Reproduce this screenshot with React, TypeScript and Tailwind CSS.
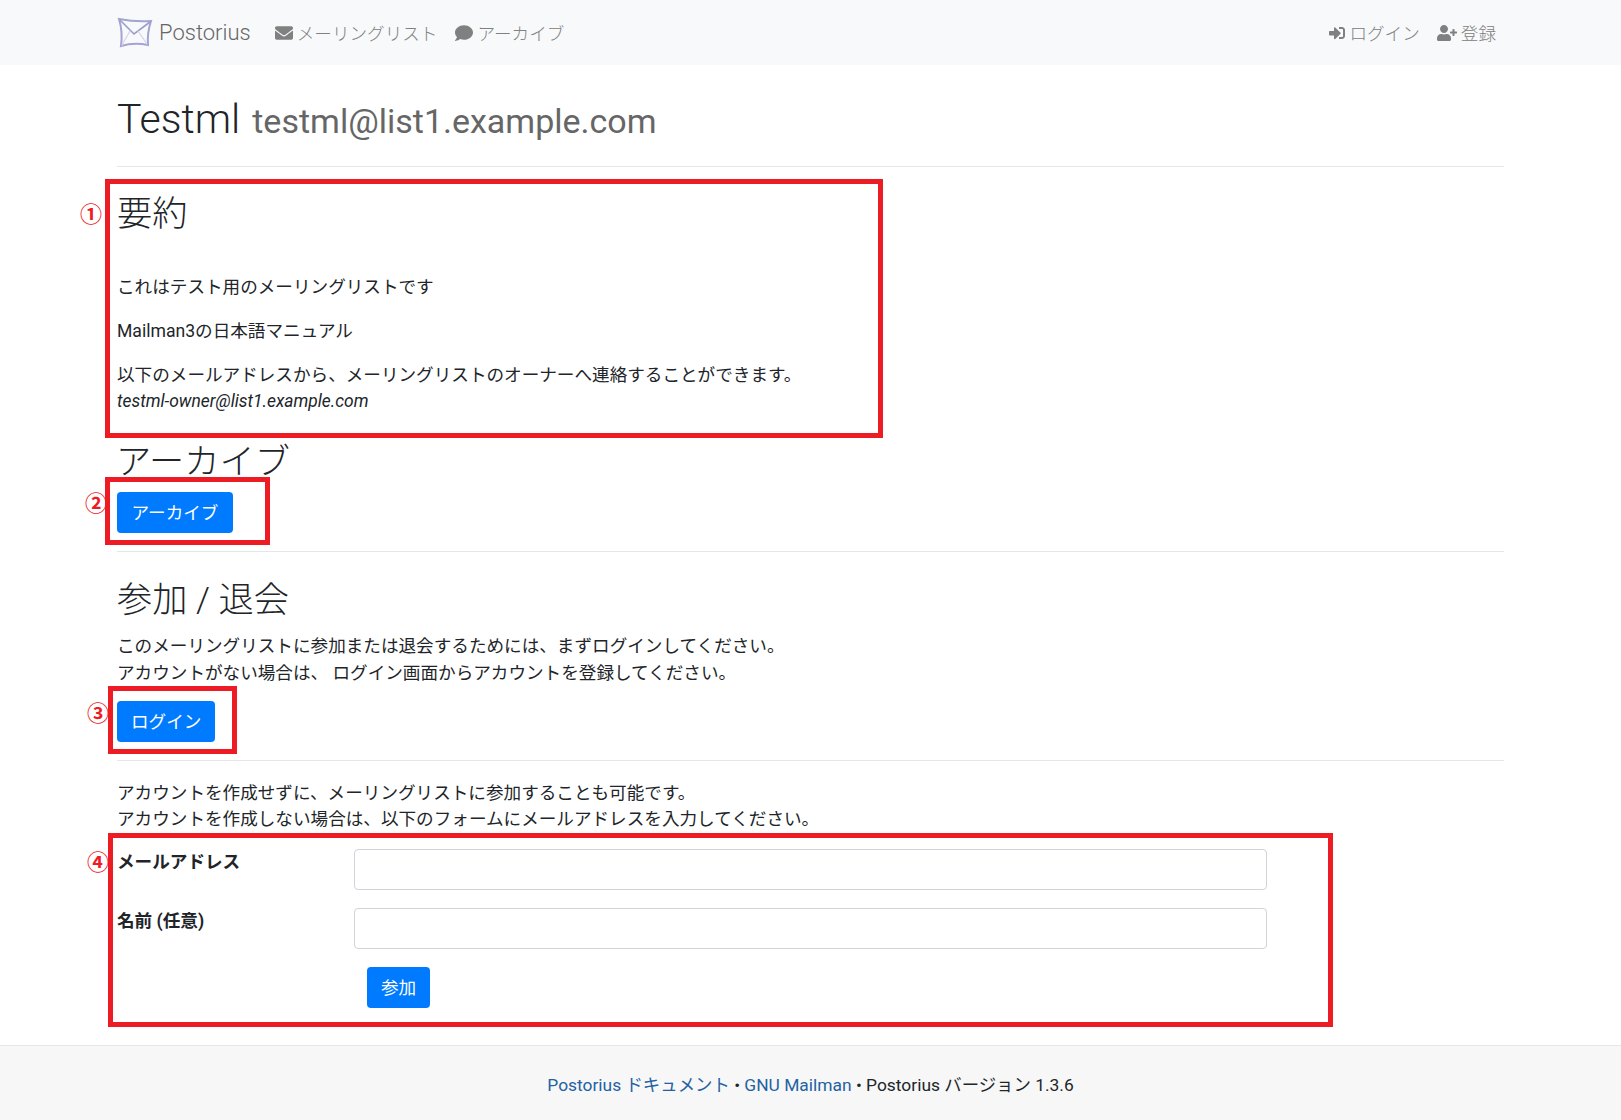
import React from 'react';
import { FaEnvelope, FaComment, FaSignInAlt, FaUserPlus } from 'react-icons/fa';

const Logo = () => (
    <svg width="36" height="31" viewBox="0 0 36 31" fill="none" strokeLinecap="round">
        <path d="M2 2 Q18 5 34 4 Q30 16 31 28 Q17 25 4 29 Q6 15 2 2 Z" stroke="#a3a3d4" strokeWidth="2" />
        <path d="M3 3 L17 17 L33 5" stroke="#9c9ccf" strokeWidth="1.6" />
        <path d="M5 28 L13 14 M30 27 L21 14" stroke="#d4d4ea" strokeWidth="1.2" />
    </svg>
);

const NavLink: React.FC<{ icon: React.ReactNode, label: string }> = ({ icon, label }) => (
    <a href="#" className="flex items-center gap-[4px] text-[#808080]">
        {icon}
        <span className="relative top-[2px]">{label}</span>
    </a>
);

const Heading: React.FC<{ children: React.ReactNode, className?: string }> = ({ children, className }) => (
    <h2 className={`text-[35.2px] leading-[42px] font-light ${className ?? ''}`}>{children}</h2>
);

const Button: React.FC<{ label: string, className?: string }> = ({ label, className }) => (
    <button className={`h-[41px] px-[14px] pt-[2px] bg-[#007bff] text-white rounded-[4px] ${className ?? ''}`}>{label}</button>
);

const RedBox: React.FC<{ className: string }> = ({ className }) => (
    <div className={`absolute border-[5px] border-[#ed1c24] pointer-events-none ${className}`} />
);

const Mark: React.FC<{ label: string, className: string }> = ({ label, className }) => (
    <span className={`absolute w-[22px] text-center text-[#ed1c24] text-[22px] leading-[24px] font-bold ${className}`}>{label}</span>
);

const App = () => {
    return (
        <div className="relative min-h-[1120px] bg-white text-[#212529] text-[17.6px] leading-[26.4px] font-normal font-['Roboto','Noto_Sans_CJK_JP',sans-serif] flex flex-col">
            {/* Navbar */}
            <nav className="h-[65px] bg-[#f8f9fa] font-light">
                <div className="w-[1387px] mx-auto h-full flex items-center">
                    <a href="#" className="flex items-center gap-[6px] text-[22px] text-[#666]">
                        <Logo />
                        <span className="relative top-[1px]">Postorius</span>
                    </a>
                    <div className="flex items-center gap-[18px] ml-[24px]">
                        <NavLink icon={<FaEnvelope size={18} />} label="メーリングリスト" />
                        <NavLink icon={<FaComment size={18} />} label="アーカイブ" />
                    </div>
                    <div className="flex items-center gap-[17px] ml-auto mr-[8px]">
                        <NavLink icon={<FaSignInAlt size={16} />} label="ログイン" />
                        <NavLink icon={<FaUserPlus size={20} />} label="登録" />
                    </div>
                </div>
            </nav>

            <main className="w-[1387px] mx-auto flex-1">
                {/* Title */}
                <div className="pt-[28px] pb-[20px] border-b border-[#e6e6e6] flex items-baseline gap-[12px]">
                    <h1 className="text-[41px] leading-[52.8px] font-light">Testml</h1>
                    <span className="text-[34px] leading-[42px] text-[#666] font-normal">testml@list1.example.com</span>
                </div>

                {/* Summary */}
                <Heading className="mt-[26px]">要約</Heading>
                <p className="mt-[39px]">これはテスト用のメーリングリストです</p>
                <p className="mt-[17.6px]">Mailman3の日本語マニュアル</p>
                <p className="mt-[17.6px]">
                    以下のメールアドレスから、メーリングリストのオーナーへ連絡することができます。
                    <br />
                    <em className="text-[17.4px]">testml-owner@list1.example.com</em>
                </p>

                {/* Archive */}
                <Heading className="mt-[26.5px] -ml-[1px]">アーカイブ</Heading>
                <Button label="アーカイブ" className="block mt-[9px] w-[116px]" />
                <hr className="mt-[18px] border-[#e6e6e6]" />

                {/* Subscribe */}
                <Heading className="mt-[27px]">参加 / 退会</Heading>
                <p className="mt-[12px]">
                    このメーリングリストに参加または退会するためには、まずログインしてください。
                    <br />
                    アカウントがない場合は、 ログイン画面からアカウントを登録してください。
                </p>
                <Button label="ログイン" className="block mt-[15px]" />
                <hr className="mt-[18px] border-[#e6e6e6]" />

                <p className="mt-[19px]">
                    アカウントを作成せずに、メーリングリストに参加することも可能です。
                    <br />
                    アカウントを作成しない場合は、以下のフォームにメールアドレスを入力してください。
                </p>

                <form className="mt-[16px] grid grid-cols-[237px_913px] gap-y-[18px] w-max">
                    <label className="font-bold">メールアドレス</label>
                    <input className="h-[41px] border border-[#ced4da] rounded-[4px] bg-white" />
                    <label className="font-bold">名前 (任意)</label>
                    <input className="h-[41px] border border-[#ced4da] rounded-[4px] bg-white" />
                    <div className="col-start-2">
                        <Button label="参加" className="block ml-[13px]" />
                    </div>
                </form>
            </main>

            {/* Footer */}
            <footer className="mt-[37px] h-[75px] pt-[4px] bg-[#f7f7f7] border-t border-[#e7e7e7] flex items-center justify-center text-[17.4px]">
                <a href="#" className="text-[#1f62a3]">Postorius ドキュメント</a>
                <span>&nbsp;•&nbsp;</span>
                <a href="#" className="text-[#1f62a3]">GNU Mailman</a>
                <span>&nbsp;• Postorius バージョン 1.3.6</span>
            </footer>

            {/* Annotations */}
            <RedBox className="left-[105px] top-[179px] w-[778px] h-[259px]" />
            <RedBox className="left-[105px] top-[477px] w-[165px] h-[68px]" />
            <RedBox className="left-[108px] top-[686px] w-[129px] h-[68px]" />
            <RedBox className="left-[108px] top-[833px] w-[1225px] h-[194px]" />
            <Mark label="①" className="left-[80px] top-[203px]" />
            <Mark label="②" className="left-[85px] top-[492px]" />
            <Mark label="③" className="left-[87px] top-[702px]" />
            <Mark label="④" className="left-[87px] top-[851px]" />
        </div>
    );
};

export default App;
